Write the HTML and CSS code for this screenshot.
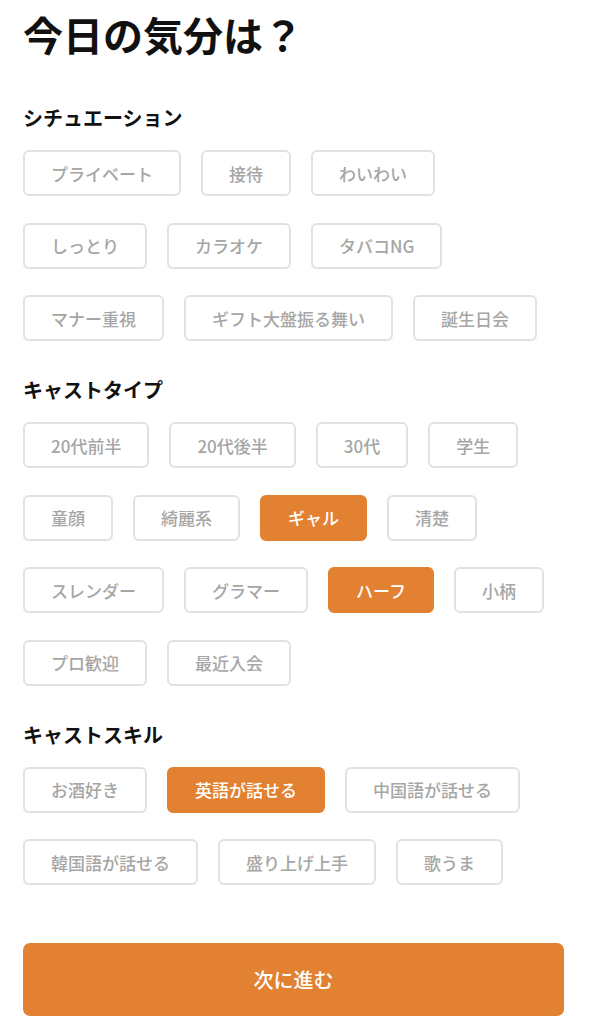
FILE: index.html
```html
<!DOCTYPE html>
<html lang="ja">
<head>
<meta charset="utf-8">
<title>今日の気分は？</title>
<link rel="stylesheet" href="styles.css">
</head>
<body>
<main class="page">
  <h1 class="title">今日の気分は？</h1>

  <section class="section">
    <h2 class="section-title">シチュエーション</h2>
    <div class="chips">
      <button class="chip">プライベート</button>
      <button class="chip">接待</button>
      <button class="chip">わいわい</button>
      <button class="chip">しっとり</button>
      <button class="chip">カラオケ</button>
      <button class="chip">タバコNG</button>
      <button class="chip">マナー重視</button>
      <button class="chip">ギフト大盤振る舞い</button>
      <button class="chip">誕生日会</button>
    </div>
  </section>

  <section class="section">
    <h2 class="section-title">キャストタイプ</h2>
    <div class="chips">
      <button class="chip">20代前半</button>
      <button class="chip">20代後半</button>
      <button class="chip">30代</button>
      <button class="chip">学生</button>
      <button class="chip">童顔</button>
      <button class="chip">綺麗系</button>
      <button class="chip is-selected">ギャル</button>
      <button class="chip">清楚</button>
      <button class="chip">スレンダー</button>
      <button class="chip">グラマー</button>
      <button class="chip is-selected">ハーフ</button>
      <button class="chip">小柄</button>
      <button class="chip">プロ歓迎</button>
      <button class="chip">最近入会</button>
    </div>
  </section>

  <section class="section">
    <h2 class="section-title">キャストスキル</h2>
    <div class="chips">
      <button class="chip">お酒好き</button>
      <button class="chip is-selected">英語が話せる</button>
      <button class="chip">中国語が話せる</button>
      <button class="chip">韓国語が話せる</button>
      <button class="chip">盛り上げ上手</button>
      <button class="chip">歌うま</button>
    </div>
  </section>

  <button class="next-button">次に進む</button>
</main>
</body>
</html>
```

FILE: styles.css
```css
html, body {
  margin: 0;
  padding: 0;
  background: #ffffff;
}

body {
  font-family: "Noto Sans CJK JP", "Noto Sans", sans-serif;
  color: #111111;
}

.page {
  width: 541px;
  padding: 10px 0 0 23px;
  display: flex;
  flex-direction: column;
}

.title {
  margin: 0;
  font-size: 40px;
  line-height: 48px;
  font-weight: 700;
  color: #111111;
  letter-spacing: 0;
}

.section {
  margin-top: 35px;
}

.title + .section {
  margin-top: 46px;
}

.section-title {
  margin: 0 0 18px 0;
  font-size: 20px;
  line-height: 28px;
  font-weight: 700;
  color: #111111;
}

.chips {
  display: flex;
  flex-wrap: wrap;
  gap: 26.5px 20px;
}

.chip {
  box-sizing: border-box;
  height: 46px;
  padding: 0 26px;
  border: 2px solid #e1e1e1;
  border-radius: 6px;
  background: #ffffff;
  font-family: "Noto Sans CJK JP", "Noto Sans", sans-serif;
  font-size: 17px;
  font-weight: 500;
  line-height: 1;
  color: #a6a6a6;
  display: inline-flex;
  align-items: center;
  justify-content: center;
  white-space: nowrap;
}

.chip.is-selected {
  background: #e38133;
  border-color: #e38133;
  color: #ffffff;
}

.next-button {
  box-sizing: border-box;
  margin-top: 58px;
  width: 541px;
  height: 73px;
  border: none;
  border-radius: 7px;
  background: #e38133;
  color: #ffffff;
  font-family: "Noto Sans CJK JP", "Noto Sans", sans-serif;
  font-size: 20px;
  font-weight: 500;
  display: flex;
  align-items: center;
  justify-content: center;
}
```
